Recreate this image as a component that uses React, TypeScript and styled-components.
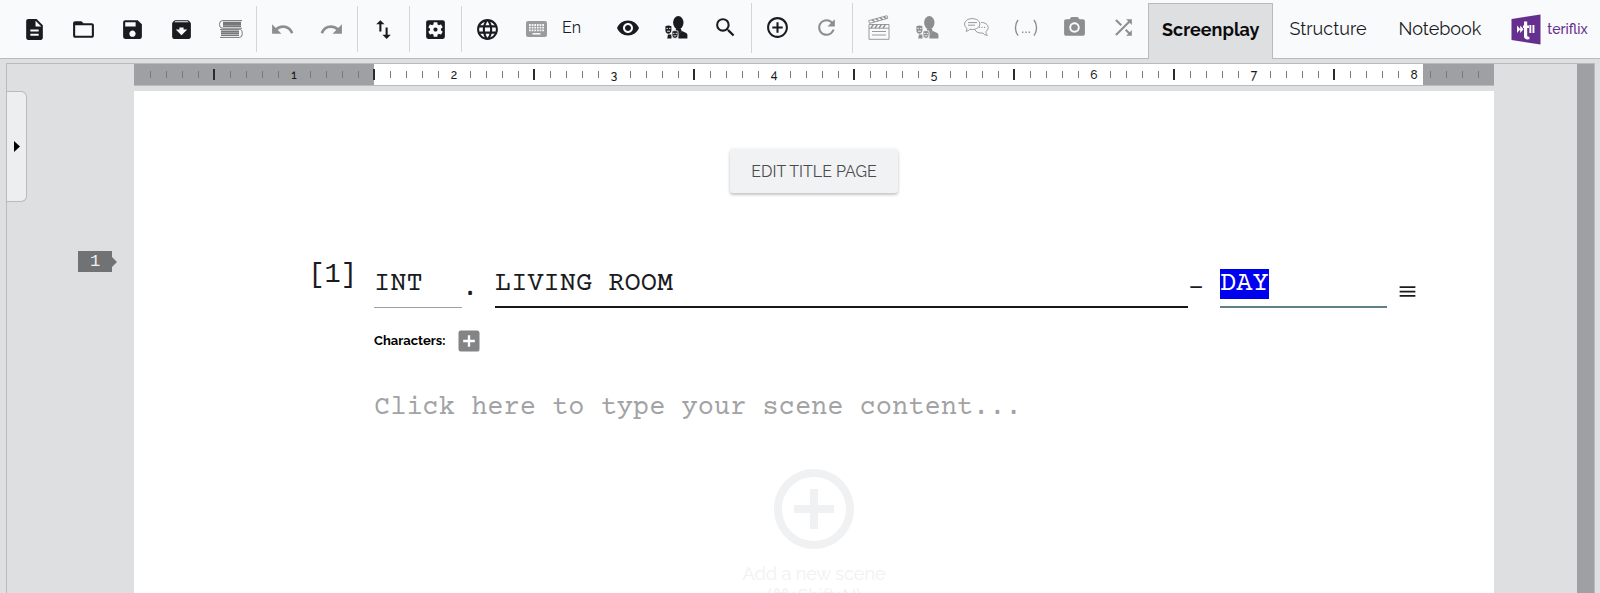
import React, { useEffect, useRef } from "react";
import styled, { createGlobalStyle } from "styled-components";
import {
  MdAddBox,
  MdAddCircleOutline,
  MdArchive,
  MdCameraAlt,
  MdDescription,
  MdFolderOpen,
  MdImportExport,
  MdLanguage,
  MdMenu,
  MdRedo,
  MdRefresh,
  MdRemoveRedEye,
  MdSave,
  MdSearch,
  MdSettingsApplications,
  MdShuffle,
  MdUndo,
} from "react-icons/md";

const sans = `Raleway, Lato, "Open Sans", sans-serif`;
const mono = `"Courier Prime", "Liberation Mono", monospace`;
const plainMono = `"Liberation Mono", monospace`;

const color = {
  bar: "#f9fafc",
  desk: "#dedfe1",
  line: "#b9babc",
  margin: "#9fa0a3",
  ink: "#1a1b1e",
  muted: "#8e8e8f",
  brand: "#652f8f",
};

const GlobalStyle = createGlobalStyle`
  *, *::before, *::after { box-sizing: border-box; }
  body { margin: 0; background: ${color.desk}; font-family: ${sans}; color: ${color.ink}; }
  button, input, textarea { font: inherit; color: inherit; margin: 0; border: 0; padding: 0; background: none; outline: 0; border-radius: 0; }
  button { cursor: pointer; }
`;

const Shell = styled.div`
  display: flex;
  flex-direction: column;
  height: 100vh;
  overflow: hidden;
`;

/* ---------- top bar ---------- */

const TopBar = styled.header`
  display: flex;
  flex: none;
  min-height: 59px;
  padding-left: 9px;
  background: ${color.bar};
  border-bottom: 1px solid ${color.line};
`;

const Tools = styled.div<{ $bottom: number }>`
  display: flex;
  align-items: center;
  padding-bottom: ${(p) => p.$bottom}px;
`;

const Group = styled.div<{ $tall?: boolean; $last?: boolean }>`
  display: flex;
  align-items: center;
  height: ${(p) => (p.$tall ? 50 : 46)}px;
  padding: 0 ${(p) => (p.$last ? 0 : 1)}px 0 1px;
  border-right: ${(p) => (p.$last ? "0" : "1px solid #d4d5d7")};
`;

const ToolButton = styled.button<{ $muted?: boolean }>`
  display: flex;
  align-items: center;
  justify-content: center;
  width: 49px;
  height: 40px;
  color: ${(p) => (p.$muted ? color.muted : color.ink)};
  svg { display: block; }
`;

const Language = styled.span`
  width: 41px;
  font-size: 16px;
  line-height: 22px;
`;

const Tabs = styled.nav`
  display: flex;
  align-items: flex-end;
  margin-left: auto;
  margin-bottom: -1px;
`;

const Tab = styled.a<{ $active?: boolean }>`
  display: flex;
  align-items: center;
  height: 56px;
  padding: 0 ${(p) => (p.$active ? 13 : 16)}px 4px;
  border: ${(p) => (p.$active ? `1px solid ${color.line}` : "0")};
  border-bottom: 0;
  background: ${(p) => (p.$active ? color.desk : "transparent")};
  color: ${(p) => (p.$active ? "#0b0b0c" : color.ink)};
  font-size: 18px;
  line-height: 24px;
  font-weight: ${(p) => (p.$active ? 700 : 400)};
  text-decoration: none;
`;

const Brand = styled.a`
  display: flex;
  align-items: center;
  gap: 6px;
  padding: 0 13px 0 14px;
  color: ${color.brand};
  font-size: 14px;
  line-height: 20px;
  font-weight: 500;
  text-decoration: none;
  svg { display: block; flex: none; }
`;

/* ---------- workspace ---------- */

const Desk = styled.main`
  display: flex;
  flex: 1;
  min-height: 0;
  margin: 4px 5px 0 6px;
  border: 1px solid ${color.line};
  border-bottom: 0;
`;

const Gutter = styled.aside`
  display: flex;
  flex: none;
  justify-content: space-between;
  align-items: flex-start;
  width: 127px;
  padding: 27px 17px 0 0;
`;

const PanelHandle = styled.button`
  display: flex;
  align-items: center;
  justify-content: center;
  width: 20px;
  height: 111px;
  background: #edeef0;
  border: 1px solid ${color.line};
  border-left: 0;
  border-radius: 0 6px 6px 0;
  svg { display: block; }
`;

const SceneTag = styled.div`
  display: flex;
  align-items: center;
  margin-top: 160px;
  span {
    width: 34px;
    background: #717274;
    color: #f0f0f0;
    font-family: ${plainMono};
    font-size: 17px;
    line-height: 21px;
    text-align: center;
  }
  &::after {
    content: "";
    border: 5px solid transparent;
    border-left-color: #717274;
    border-right: 0;
  }
`;

const Column = styled.div`
  display: flex;
  flex: 1;
  flex-direction: column;
  min-width: 0;
`;

const RulerBar = styled.div`
  display: flex;
  flex: none;
  align-items: center;
  height: 22px;
  padding: 0 8px;
  overflow: hidden;
  border-bottom: 1px solid ${color.line};
  background: linear-gradient(
    to right,
    ${color.margin} 240px,
    #fff 240px,
    #fff calc(100% - 71px),
    ${color.margin} calc(100% - 71px)
  );
`;

const Mark = styled.span<{ $kind: "tick" | "half" | "number" }>`
  display: flex;
  flex: none;
  justify-content: center;
  width: 16px;
  color: #1a1a1a;
  font-size: 12px;
  line-height: 16px;
  font-weight: 500;
  &::before {
    content: "";
    display: ${(p) => (p.$kind === "number" ? "none" : "block")};
    width: ${(p) => (p.$kind === "half" ? 2 : 1)}px;
    height: ${(p) => (p.$kind === "half" ? 11 : 7)}px;
    background: ${(p) => (p.$kind === "half" ? "#2b2b2d" : "#77787a")};
  }
`;

const Paper = styled.article`
  display: flex;
  flex: 1;
  flex-direction: column;
  min-height: 0;
  margin-top: 5px;
  padding: 58px 76px 0 0;
  overflow: hidden;
  background: #fff;
`;

const Centered = styled.div`
  display: flex;
  flex: none;
  justify-content: center;
  margin-right: -76px;
`;

const TitleButton = styled.button`
  padding: 12px 21px 10px;
  background: #f1f2f4;
  border-radius: 3px;
  box-shadow: 0 2px 3px rgba(0, 0, 0, 0.2), 0 0 4px rgba(0, 0, 0, 0.07);
  color: #4a4b4d;
  font-size: 16px;
  line-height: 22px;
`;

const Heading = styled.div`
  display: grid;
  flex: none;
  grid-template-columns: 240px 88px 33px minmax(0, 1fr) 32px 167px 31px;
  align-items: start;
  margin-top: 67px;
  font-family: ${mono};
  font-size: 27px;
  line-height: 30px;
`;

const SceneNumber = styled.span`
  padding-right: 17px;
  font-family: ${plainMono};
  text-align: right;
`;

const Joint = styled.span`
  margin-top: 14px;
`;

const Field = styled.input<{ $rule: string; $thin?: boolean }>`
  width: 100%;
  height: 39px;
  margin-top: 9px;
  padding: 0 0 8px;
  border-bottom: ${(p) => (p.$thin ? 1 : 2)}px solid ${(p) => p.$rule};
  &::selection {
    background: #0000f0;
    color: #fff;
  }
`;

const MenuButton = styled.button`
  display: flex;
  justify-content: flex-end;
  margin-top: 21px;
  svg { display: block; }
`;

const Script = styled.div`
  display: flex;
  flex: none;
  flex-direction: column;
  padding-left: 240px;
`;

const Characters = styled.div`
  display: flex;
  align-items: center;
  gap: 10px;
  height: 28px;
  margin-top: 19px;
  color: #000;
  font-size: 13px;
  line-height: 20px;
  font-weight: 700;
`;

const AddCharacter = styled.button`
  color: #838486;
  svg { display: block; }
`;

const SceneContent = styled.textarea`
  display: block;
  height: 30px;
  margin-top: 38px;
  resize: none;
  overflow: hidden;
  font-family: ${mono};
  font-size: 27px;
  line-height: 30px;
  &::placeholder {
    color: #a2a3a4;
    opacity: 1;
  }
`;

const AddScene = styled.button`
  display: flex;
  flex-direction: column;
  align-items: center;
  margin-top: 38px;
  color: #eff1f3;
  font-size: 18px;
  line-height: 22px;
  svg { display: block; margin-bottom: 6px; }
`;

const ScrollTrack = styled.div`
  flex: none;
  width: 17px;
  margin-left: 83px;
  background: ${color.margin};
`;

/* ---------- drawings ---------- */

const Books = () => (
  <svg width="24" height="18" viewBox="0 0 24 18" fill="none" stroke="#77787a">
    <path d="M23 .6H3.2a2.7 3.8 0 0 0 0 7.6H23" />
    <path d="M22 2.6H4M22 4.4H4M22 6.2H4" strokeWidth="1.6" />
    <path d="M1 9.4h19.6a2.7 4 0 0 1 0 8H1" />
    <path d="M2 11.4h18M2 13.3h18M2 15.3h18" strokeWidth="1.6" />
  </svg>
);

const KeyboardIcon = () => (
  <svg width="21" height="16" viewBox="0 0 21 16">
    <rect width="21" height="16" rx="2" fill="#9a9b9c" />
    <path
      d="M3 4h15M3 6.700h15M3 9.400h15"
      stroke="#f4f5f7"
      strokeWidth="1.800"
      strokeDasharray="1.800 .84"
    />
    <path d="M6.500 12.800h8" stroke="#f4f5f7" strokeWidth="1.600" />
  </svg>
);

const Cast = () => (
  <svg width="23" height="23" viewBox="0 0 23 23" fill="currentColor">
    <ellipse cx="13.3" cy="6.6" rx="5.2" ry="6.6" />
    <path d="M10.800 12.500h5l1 3-3 3.500-3-3z" />
    <path d="M13.4 22.4V19l3.6-4 4.2 1.9c.9.5 1.2 1.2 1.2 2.2v3.3z" />
    <path d="M3 18.5h3.500v3.900H2.200z" />
    <path d="M.4 10.2c2-.9 4-.9 6 0v4c0 2-1.400 3.600-3 3.600s-3-1.600-3-3.600z" />
    <path
      d="M7 15.2c2-.8 4-.8 6 0v3.700c0 2-1.400 3.400-3 3.400s-3-1.400-3-3.400z"
      stroke="#f9fafc"
      strokeWidth=".8"
    />
    <path
      d="M1.4 12.4h1.500M4 12.4h1.500M2 15.2h3M8 17.4h1.400M10.6 17.4H12M8.6 19.4q1.400 1.400 2.800 0"
      stroke="#f9fafc"
      strokeWidth=".9"
      fill="none"
    />
  </svg>
);

const Clapper = () => (
  <svg width="22" height="25" viewBox="0 0 22 25" fill="none" stroke="currentColor" strokeWidth=".9">
    <path d="M1 9.5h20v14.8H1zM1 13.2h20M4 16.5h14M4 20h14" />
    <path d="M3 13l2.4-3.3M7 13l2.4-3.3M11 13l2.4-3.3M15 13l2.4-3.3" strokeWidth="1.4" />
    <path d="M.7 5.6L19 .7l.8 2.6L1.5 8.4z" />
    <path d="M4 4.8l2.6 2M8 3.8l2.6 2M12 2.6l2.6 2M15.7 1.6l2.6 2" strokeWidth="1.4" />
  </svg>
);

const Chat = () => (
  <svg width="25" height="19" viewBox="0 0 25 19" fill="none" stroke="currentColor" strokeWidth=".9">
    <path d="M8.2.6c4.3 0 7.6 2.3 7.6 5.4s-3.3 5.5-7.6 5.5c-.8 0-1.6-.1-2.3-.3-1 1.2-2.3 2-3.9 2 .7-.8 1-1.800.9-2.900C1.500 9.300.6 7.800.6 6 .6 2.900 3.900.6 8.200.6z" />
    <path d="M4 4.600h9M4 7.200h7" />
    <path d="M17 4.400c4 0 7.200 2.200 7.200 5.200 0 1.700-.9 3-2.300 4 0 1.500.5 2.700 1.500 3.700-1.900 0-3.500-.8-4.500-2.300-3.800.5-6.800-.7-8.200-3.400" />
    <path d="M15.500 9.300h.1M18 9.300h.1M20.500 9.300h.1" strokeLinecap="round" strokeWidth="1.200" />
  </svg>
);

const Parenthetical = () => (
  <svg width="24" height="18" viewBox="0 0 24 18" fill="none" stroke="currentColor" strokeWidth="1.4">
    <path d="M4 1C.6 5.500.6 12 4 16.600M20 1c3.400 4.500 3.400 11 0 15.600" />
    <path d="M8 13.300h1.400M11.300 13.300h1.400M14.600 13.300H16" />
  </svg>
);

const Logo = () => (
  <svg width="30" height="31" viewBox="0 0 30 31">
    <path d="M.5 5L29.500.4v30L.5 26z" fill={color.brand} />
    <g fill="#fff">
      <path d="M6 11.500l3.300 3.700L6 19zM9.200 11.500l3.300 3.700L9.200 19z" />
      <path d="M13 7.500h3.200v4H18v2.600h-1.800v7.500c0 1 .8 1.300 2.200 1.200v2.500c-3.600.5-5.400-.6-5.400-3.500v-7.700h-1v-2.600h1z" />
      <path d="M18.400 11h1.900v8h-1.900zM21.500 11h1.900v8h-1.900z" />
    </g>
  </svg>
);

/* ---------- pieces ---------- */

type Tool = { label: string; icon: React.ReactNode; muted?: boolean };

const S = 25;

const fileTools: Tool[][] = [
  [
    { label: "New", icon: <MdDescription size={S} /> },
    { label: "Open", icon: <MdFolderOpen size={S} /> },
    { label: "Save", icon: <MdSave size={S} /> },
    { label: "Export", icon: <MdArchive size={S} /> },
    { label: "Library", icon: <Books /> },
  ],
  [
    { label: "Undo", icon: <MdUndo size={S} />, muted: true },
    { label: "Redo", icon: <MdRedo size={S} />, muted: true },
  ],
  [{ label: "Import and export", icon: <MdImportExport size={S} /> }],
  [{ label: "Settings", icon: <MdSettingsApplications size={S} /> }],
];

const languageTools: Tool[] = [
  { label: "Language", icon: <MdLanguage size={S} /> },
  { label: "Keyboard", icon: <KeyboardIcon /> },
];

const viewTools: Tool[] = [
  { label: "View", icon: <MdRemoveRedEye size={24} /> },
  { label: "Cast", icon: <Cast /> },
  { label: "Search", icon: <MdSearch size={S} /> },
];

const sceneTools: Tool[] = [
  { label: "Add", icon: <MdAddCircleOutline size={S} /> },
  { label: "Refresh", icon: <MdRefresh size={S} />, muted: true },
];

const elementTools: Tool[] = [
  { label: "Scene heading", icon: <Clapper />, muted: true },
  { label: "Character", icon: <Cast />, muted: true },
  { label: "Dialogue", icon: <Chat />, muted: true },
  { label: "Parenthetical", icon: <Parenthetical />, muted: true },
  { label: "Shot", icon: <MdCameraAlt size={S} />, muted: true },
  { label: "Transition", icon: <MdShuffle size={S} />, muted: true },
];

const ToolSet = ({ tools }: { tools: Tool[] }) => (
  <>
    {tools.map((t) => (
      <ToolButton key={t.label} type="button" aria-label={t.label} $muted={t.muted}>
        {t.icon}
      </ToolButton>
    ))}
  </>
);

const Ruler = () => (
  <RulerBar aria-hidden="true">
    {Array.from({ length: 84 }, (_, i) => {
      const step = i + 1;
      const kind = step % 10 === 0 ? "number" : step % 5 === 0 ? "half" : "tick";
      return (
        <Mark key={step} $kind={kind}>
          {kind === "number" ? step / 10 : null}
        </Mark>
      );
    })}
  </RulerBar>
);

export default function App() {
  const timeRef = useRef<HTMLInputElement>(null);

  useEffect(() => {
    timeRef.current?.focus();
    timeRef.current?.select();
  }, []);

  return (
    <Shell>
      <GlobalStyle />
      <TopBar>
        <Tools $bottom={0}>
          {fileTools.map((tools) => (
            <Group key={tools[0].label}>
              <ToolSet tools={tools} />
            </Group>
          ))}
          <Group $last>
            <ToolSet tools={languageTools} />
          </Group>
        </Tools>
        <Tools $bottom={3}>
          <Group $tall>
            <Language>En</Language>
            <ToolSet tools={viewTools} />
          </Group>
          <Group $tall>
            <ToolSet tools={sceneTools} />
          </Group>
          <Group $tall $last>
            <ToolSet tools={elementTools} />
          </Group>
        </Tools>
        <Tabs>
          <Tab href="#screenplay" $active aria-current="page">
            Screenplay
          </Tab>
          <Tab href="#structure">Structure</Tab>
          <Tab href="#notebook">Notebook</Tab>
        </Tabs>
        <Brand href="#teriflix">
          <Logo />
          teriflix
        </Brand>
      </TopBar>

      <Desk>
        <Gutter>
          <PanelHandle type="button" aria-label="Open side panel">
            <svg width="6" height="11" viewBox="0 0 6 11">
              <path d="M0 0l6 5.500L0 11z" fill="#000" />
            </svg>
          </PanelHandle>
          <SceneTag>
            <span>1</span>
          </SceneTag>
        </Gutter>
        <Column>
          <Ruler />
          <Paper>
            <Centered>
              <TitleButton type="button">EDIT TITLE PAGE</TitleButton>
            </Centered>
            <Heading>
              <SceneNumber>[1]</SceneNumber>
              <Field aria-label="Location type" defaultValue="INT" $rule="#a0a0a0" $thin />
              <Joint>.</Joint>
              <Field aria-label="Location" defaultValue="LIVING ROOM" $rule="#17171a" />
              <Joint>–</Joint>
              <Field ref={timeRef} aria-label="Time of day" defaultValue="DAY" $rule="#5f8087" />
              <MenuButton type="button" aria-label="Scene menu">
                <MdMenu size={21} />
              </MenuButton>
            </Heading>
            <Script>
              <Characters>
                Characters:
                <AddCharacter type="button" aria-label="Add character">
                  <MdAddBox size={28} />
                </AddCharacter>
              </Characters>
              <SceneContent
                aria-label="Scene content"
                rows={1}
                placeholder="Click here to type your scene content..."
              />
            </Script>
            <Centered>
              <AddScene type="button">
                <MdAddCircleOutline size={96} />
                <span>Add a new scene</span>
                <span>(⌘+Shift+N)</span>
              </AddScene>
            </Centered>
          </Paper>
        </Column>
        <ScrollTrack />
      </Desk>
    </Shell>
  );
}
